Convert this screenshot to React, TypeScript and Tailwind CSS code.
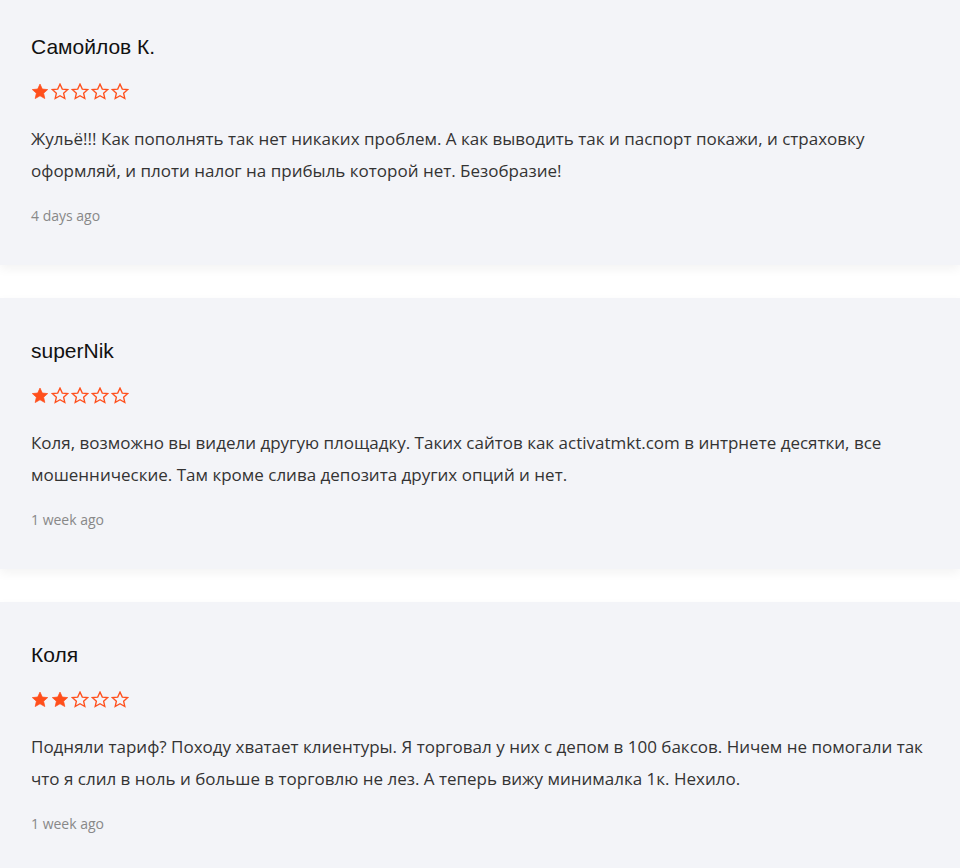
import React from "react";

type Review = {
  name: string;
  rating: number;
  text: string;
  date: string;
};

const reviews: Review[] = [
  {
    name: "Самойлов К.",
    rating: 1,
    text: "Жульё!!! Как пополнять так нет никаких проблем. А как выводить так и паспорт покажи, и страховку оформляй, и плоти налог на прибыль которой нет. Безобразие!",
    date: "4 days ago",
  },
  {
    name: "superNik",
    rating: 1,
    text: "Коля, возможно вы видели другую площадку. Таких сайтов как activatmkt.com в интрнете десятки, все мошеннические. Там кроме слива депозита других опций и нет.",
    date: "1 week ago",
  },
  {
    name: "Коля",
    rating: 2,
    text: "Подняли тариф? Походу хватает клиентуры. Я торговал у них с депом в 100 баксов. Ничем не помогали так что я слил в ноль и больше в торговлю не лез. А теперь вижу минималка 1к. Нехило.",
    date: "1 week ago",
  },
];

function Star({ filled }: { filled: boolean }) {
  return (
    <svg width="18" height="17" viewBox="0 0 24 23" className="block">
      <polygon
        points="12,1.5 15.1,8.2 22.4,8.9 16.9,13.8 18.5,21 12,17.3 5.5,21 7.1,13.8 1.6,8.9 8.9,8.2"
        fill={filled ? "#ff4f1c" : "none"}
        stroke="#ff4f1c"
        strokeWidth={filled ? 1 : 1.8}
        strokeLinejoin="miter"
      />
    </svg>
  );
}

export default function App() {
  return (
    <div className="min-h-[868px] bg-white overflow-hidden">
      <div className="-mt-[6px] flex flex-col gap-[33px]">
        {reviews.map((r) => (
          <div
            key={r.name}
            className="bg-[#f3f4f8] pt-[39px] pb-[39px] pl-[31px] pr-[36px] shadow-[0_4px_10px_rgba(0,0,0,0.05)]"
          >
            <div className="text-[21px] leading-[28px] text-[#111] font-['Liberation_Sans',Arial,sans-serif]">
              {r.name}
            </div>
            <div className="mt-[22px] flex items-center gap-[2px] h-[17px]">
              {[0, 1, 2, 3, 4].map((i) => (
                <Star key={i} filled={i < r.rating} />
              ))}
            </div>
            <p className="mt-[23px] text-[17px] leading-[32px] text-[#333] font-['Open_Sans',sans-serif]">
              {r.text}
            </p>
            <div className="mt-[19px] text-[14px] leading-[20px] text-[#888] font-['Open_Sans',sans-serif]">
              {r.date}
            </div>
          </div>
        ))}
      </div>
    </div>
  );
}
